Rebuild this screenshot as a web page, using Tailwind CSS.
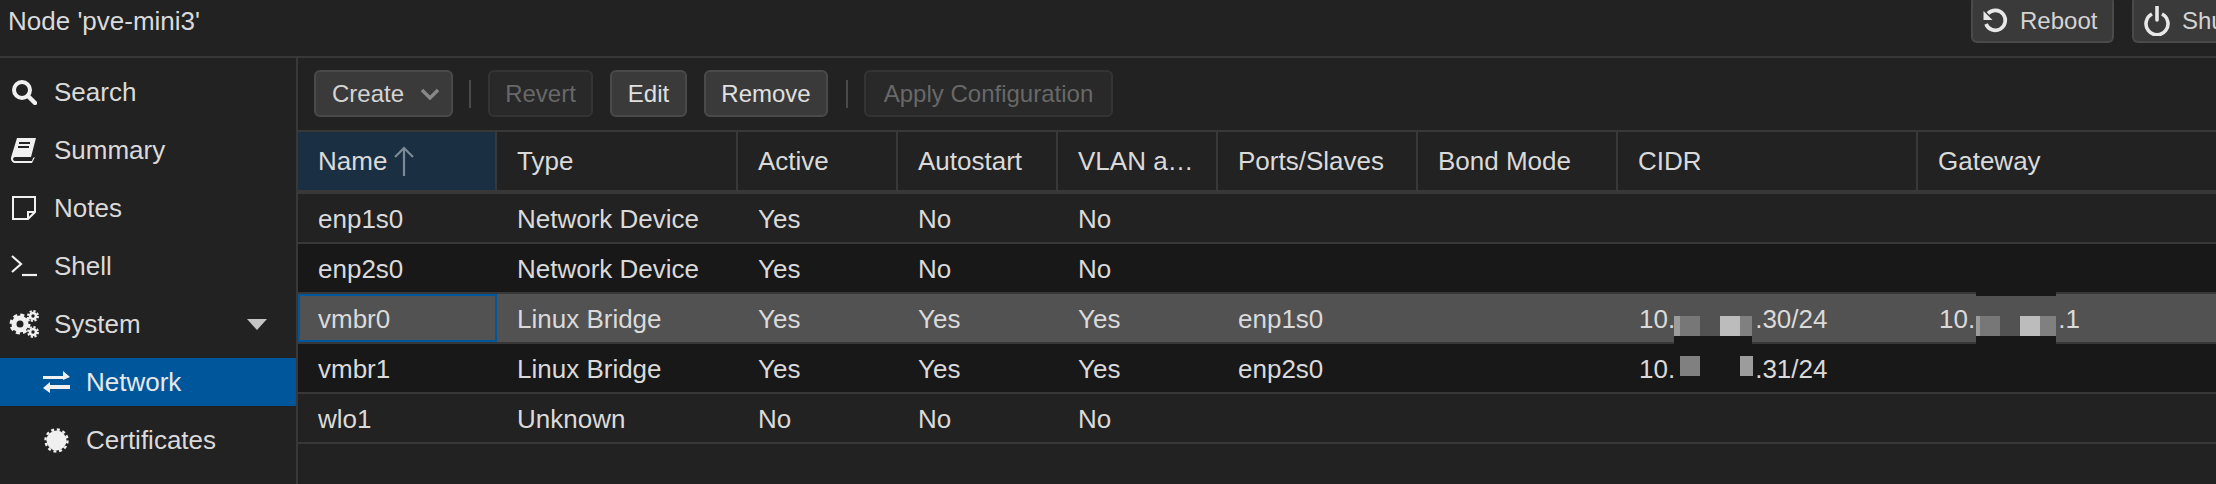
<!doctype html>
<html><head><meta charset="utf-8"><script src="https://cdn.jsdelivr.net/npm/@tailwindcss/browser@4"></script></head>
<body class="bg-[#222222] overflow-hidden">
<div class="w-[2216px] h-[484px] overflow-hidden flex flex-col bg-[#222222] text-[#dadada] text-[26px] leading-[30px] font-['Liberation_Sans',sans-serif]">
  <header class="h-[58px] shrink-0 border-b-2 border-[#383838] flex items-start pl-[8px]">
    <div class="mt-[6px]">Node 'pve-mini3'</div>
    <div class="ml-auto flex gap-[18px] -mt-[4px] text-[24px]">
      <div class="w-[143px] h-[47px] rounded-[6px] border-2 border-[#4a4a4a] bg-[#3a3a3a] flex items-center pl-[9px] pt-[2px] gap-[12px] text-[#d4d4d4]">
        <svg class="w-[26px] h-[26px]" viewBox="0 0 26 26" fill="none" stroke="#e8e8e8" stroke-width="3.6"><path d="M6 5.5A10 10 0 1 1 4 16"/><path d="M1.5 3v9h9z" fill="#e8e8e8" stroke="none"/></svg>
        <span>Reboot</span>
      </div>
      <div class="w-[84px] h-[47px] rounded-l-[6px] border-2 border-r-0 border-[#4a4a4a] bg-[#3a3a3a] flex items-center pl-[10px] pt-[2px] gap-[12px] text-[#d4d4d4] overflow-hidden">
        <svg class="w-[26px] h-[30px] shrink-0" viewBox="0 0 26 30" fill="none" stroke="#e8e8e8" stroke-width="3.6"><path d="M8 8a11 11 0 1 0 10 0"/><path d="M13 1v13" stroke-linecap="round"/></svg>
        <span class="shrink-0">Shutdown</span>
      </div>
    </div>
  </header>
  <div class="flex flex-1 min-h-0">
    <nav class="w-[298px] shrink-0 border-r-2 border-[#383838] pt-[10px] flex flex-col gap-[10px]">
      <div class="h-[48px] flex items-center pl-[11px]"><svg class="w-[26px] h-[26px] mr-[17px]" viewBox="0 0 26 26" fill="none" stroke="#f0f0f0"><circle cx="11" cy="11" r="8" stroke-width="4"/><path d="M17 17l7 7" stroke-width="4.4" stroke-linecap="round"/></svg>Search</div>
      <div class="h-[48px] flex items-center pl-[11px]"><svg class="w-[26px] h-[26px] mr-[17px]" viewBox="0 0 26 26"><path d="M6 1h19l-5 19H4c-1 0-2 1-2 2s1 2 2 2h17l1-3 2-1-3 6H4c-2 0-4-2-4-4 0-1 0-2 .5-3z" fill="#f0f0f0"/><path d="M8 6h11M7 10h11" stroke="#222222" stroke-width="2"/></svg>Summary</div>
      <div class="h-[48px] flex items-center pl-[11px]"><svg class="w-[26px] h-[26px] mr-[17px]" viewBox="0 0 26 26" fill="none" stroke="#f0f0f0" stroke-width="2"><path d="M2 2h22v15l-7 7H2zM24 17h-7v7"/></svg>Notes</div>
      <div class="h-[48px] flex items-center pl-[11px]"><svg class="w-[26px] h-[26px] mr-[17px]" viewBox="0 0 26 26" fill="none" stroke="#f0f0f0" stroke-width="2.2"><path d="M1 3l9 8-9 8"/><path d="M11 22h15"/></svg>Shell</div>
      <div class="h-[48px] flex items-center pl-[9px]">
        <svg class="w-[30px] h-[28px] mr-[15px]" viewBox="0 0 30 28" fill="none" stroke="#f0f0f0"><circle cx="11" cy="14" r="6" stroke-width="5"/><circle cx="11" cy="14" r="9" stroke-width="3" stroke-dasharray="4 3.07"/><circle cx="24" cy="6" r="3" stroke-width="2.6"/><circle cx="24" cy="6" r="5" stroke-width="2" stroke-dasharray="2.2 1.7"/><circle cx="24" cy="22" r="3" stroke-width="2.6"/><circle cx="24" cy="22" r="5" stroke-width="2" stroke-dasharray="2.2 1.7"/></svg>
        System
        <svg class="w-[20px] h-[11px] ml-auto mr-[29px]" viewBox="0 0 20 11"><path d="M0 0h20L10 11z" fill="#c4c4c4"/></svg>
      </div>
      <div class="h-[48px] flex items-center pl-[42px] bg-[#00569b] text-[#e8e8e8]"><svg class="w-[29px] h-[22px] mr-[15px]" viewBox="0 0 29 22" fill="#f0f0f0"><path d="M1 5h20V0l7 6-7 3V8H1zM28 14H8v-3l-7 6 7 5v-4h20z"/></svg>Network</div>
      <div class="h-[48px] flex items-center pl-[44px]"><svg class="w-[25px] h-[25px] mr-[17px]" viewBox="0 0 25 25"><circle cx="12.5" cy="12.5" r="10" fill="#f0f0f0"/><circle cx="12.5" cy="12.5" r="11" fill="none" stroke="#f0f0f0" stroke-width="2.4" stroke-dasharray="3 2.76"/></svg>Certificates</div>
    </nav>
    <main class="flex-1 min-w-0 flex flex-col">
      <div class="h-[72px] shrink-0 flex items-start pl-[16px] pt-[12px] text-[24px] text-[#d4d4d4]">
        <div class="w-[139px] h-[47px] rounded-[6px] border-2 border-[#4a4a4a] bg-[#3a3a3a] flex items-center pl-[16px]">Create<svg class="w-[18px] h-[12px] ml-[17px]" viewBox="0 0 18 12" fill="none" stroke="#888888" stroke-width="3.4"><path d="M1 2l8 8 8-8"/></svg></div>
        <div class="w-[2px] h-[28px] bg-[#4a4a4a] ml-[16px] mr-[17px] mt-[10px]"></div>
        <div class="w-[105px] h-[47px] rounded-[6px] border-2 border-[#343434] bg-[#292929] text-[#686868] flex items-center justify-center">Revert</div>
        <div class="w-[77px] h-[47px] rounded-[6px] border-2 border-[#4a4a4a] bg-[#3a3a3a] text-[#e0e0e0] flex items-center justify-center ml-[17px]">Edit</div>
        <div class="w-[124px] h-[47px] rounded-[6px] border-2 border-[#4a4a4a] bg-[#3a3a3a] text-[#e0e0e0] flex items-center justify-center ml-[17px]">Remove</div>
        <div class="w-[2px] h-[28px] bg-[#4a4a4a] ml-[18px] mr-[16px] mt-[10px]"></div>
        <div class="w-[249px] h-[47px] rounded-[6px] border-2 border-[#343434] bg-[#292929] text-[#686868] flex items-center justify-center">Apply Configuration</div>
      </div>
      <div class="h-[64px] shrink-0 flex border-t-2 border-b-4 border-[#383838]">
        <div class="w-[199px] bg-[#1a2f42] pl-[20px] flex items-center border-r-2 border-[#383838]">Name<svg class="w-[20px] h-[30px] ml-[7px]" viewBox="0 0 20 30" fill="none" stroke="#7d8a96" stroke-width="2.2"><path d="M10 30V2M1 11l9-9 9 9"/></svg></div>
        <div class="w-[241px] pl-[20px] flex items-center border-r-2 border-[#383838]">Type</div>
        <div class="w-[160px] pl-[20px] flex items-center border-r-2 border-[#383838]">Active</div>
        <div class="w-[160px] pl-[20px] flex items-center border-r-2 border-[#383838]">Autostart</div>
        <div class="w-[160px] pl-[20px] flex items-center border-r-2 border-[#383838]">VLAN a…</div>
        <div class="w-[200px] pl-[20px] flex items-center border-r-2 border-[#383838]">Ports/Slaves</div>
        <div class="w-[200px] pl-[20px] flex items-center border-r-2 border-[#383838]">Bond Mode</div>
        <div class="w-[300px] pl-[20px] flex items-center border-r-2 border-[#383838]">CIDR</div>
        <div class="flex-1 pl-[20px] flex items-center">Gateway</div>
      </div>
      <div class="h-[50px] shrink-0 flex items-center pt-[2px] border-b-2 border-[#383838]">
        <div class="w-[199px] pl-[20px]">enp1s0</div><div class="w-[241px] pl-[20px]">Network Device</div><div class="w-[160px] pl-[20px]">Yes</div><div class="w-[160px] pl-[20px]">No</div><div class="w-[160px] pl-[20px]">No</div>
      </div>
      <div class="h-[50px] shrink-0 flex items-center pt-[2px] border-b-2 border-[#383838] bg-[#181818]">
        <div class="w-[199px] pl-[20px]">enp2s0</div><div class="w-[241px] pl-[20px]">Network Device</div><div class="w-[160px] pl-[20px]">Yes</div><div class="w-[160px] pl-[20px]">No</div><div class="w-[160px] pl-[20px]">No</div>
      </div>
      <div class="h-[50px] shrink-0 flex items-center pt-[2px] border-b-2 border-[#383838] bg-[#525252]">
        <div class="w-[199px] h-[48px] -mt-[2px] pl-[18px] pt-[2px] flex items-center border-2 border-[#00569b] self-start">vmbr0</div><div class="w-[241px] pl-[20px]">Linux Bridge</div><div class="w-[160px] pl-[20px]">Yes</div><div class="w-[160px] pl-[20px]">Yes</div><div class="w-[160px] pl-[20px]">Yes</div><div class="w-[200px] pl-[20px]">enp1s0</div><div class="w-[200px]"></div>
        <div class="w-[300px] pl-[21px] flex items-center relative">10.<span class="w-[80px] shrink-0"></span>.30/24
          <span class="absolute left-[56px] top-[12px] w-[78px] h-[20px] flex">
            <span class="w-[6px] bg-[#9c9c9c]"></span><span class="w-[20px] bg-[#777777]"></span><span class="w-[20px]"></span><span class="w-[20px] bg-[#bcbcbc]"></span><span class="w-[12px] bg-[#808080]"></span>
          </span>
          <span class="absolute left-[56px] top-[32px] w-[78px] h-[8px] bg-[#181818]"></span>
        </div>
        <div class="flex-1 pl-[21px] flex items-center relative">10.
          <span class="absolute left-[58px] -top-[12px] w-[80px] h-[4px] bg-[#181818]"></span>
          <span class="absolute left-[58px] top-[12px] w-[80px] h-[20px] flex">
            <span class="w-[4px] bg-[#9c9c9c]"></span><span class="w-[20px] bg-[#777777]"></span><span class="w-[20px]"></span><span class="w-[20px] bg-[#bcbcbc]"></span><span class="w-[16px] bg-[#808080]"></span>
          </span>
          <span class="absolute left-[58px] top-[32px] w-[80px] h-[8px] bg-[#181818]"></span>
          <span class="ml-[83px]">.1</span>
        </div>
      </div>
      <div class="h-[50px] shrink-0 flex items-center pt-[2px] border-b-2 border-[#383838] bg-[#181818]">
        <div class="w-[199px] pl-[20px]">vmbr1</div><div class="w-[241px] pl-[20px]">Linux Bridge</div><div class="w-[160px] pl-[20px]">Yes</div><div class="w-[160px] pl-[20px]">Yes</div><div class="w-[160px] pl-[20px]">Yes</div><div class="w-[200px] pl-[20px]">enp2s0</div><div class="w-[200px]"></div>
        <div class="w-[300px] pl-[21px] flex items-center relative">10.<span class="w-[80px] shrink-0"></span>.31/24
          <span class="absolute left-[62px] top-[2px] w-[20px] h-[20px] bg-[#808080]"></span>
          <span class="absolute left-[122px] top-[2px] w-[13px] h-[20px] bg-[#9c9c9c]"></span>
        </div>
      </div>
      <div class="h-[50px] shrink-0 flex items-center pt-[2px] border-b-2 border-[#383838]">
        <div class="w-[199px] pl-[20px]">wlo1</div><div class="w-[241px] pl-[20px]">Unknown</div><div class="w-[160px] pl-[20px]">No</div><div class="w-[160px] pl-[20px]">No</div><div class="w-[160px] pl-[20px]">No</div>
      </div>
    </main>
  </div>
</div>
</body></html>
